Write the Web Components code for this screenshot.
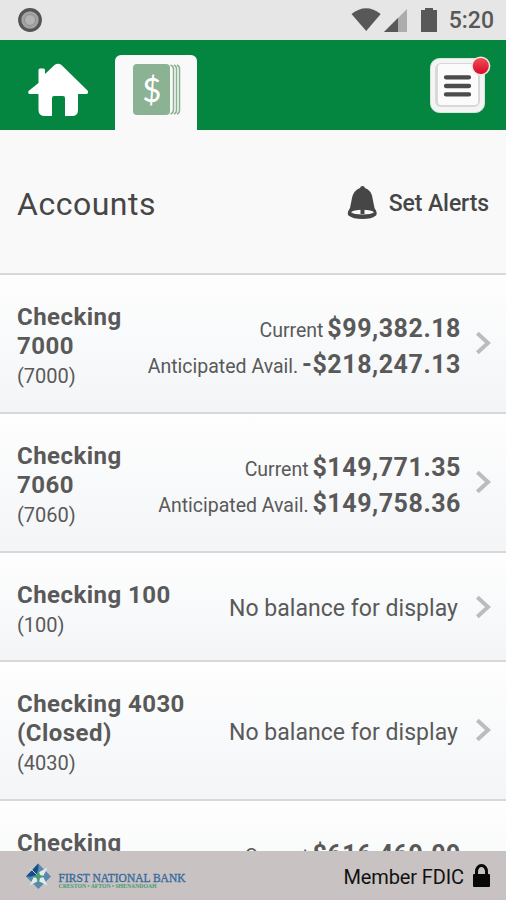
<!DOCTYPE html>
<html lang="en"><head><meta charset="utf-8"><title>Accounts</title>
<style>
html,body{margin:0;height:100%;overflow:hidden;background:#f9f9f9;font-family:Roboto,"Liberation Sans",sans-serif}
</style></head><body>
<bank-app></bank-app>
<script>
function define(name, html, setup){
  const t=document.createElement('template');t.innerHTML=html;
  customElements.define(name,class extends HTMLElement{
    connectedCallback(){
      if(this.shadowRoot)return;
      this.attachShadow({mode:'open'}).appendChild(t.content.cloneNode(true));
      if(setup)setup(this,this.shadowRoot);
    }
  });
}
define('status-bar',`<style>
:host{display:flex;align-items:center;height:40px;box-sizing:border-box;background:#e6e6e6;padding:0 12px 0 18px;color:#585858}
.sp{flex:1}svg{display:block;flex:none}
.time{font-size:23px;font-weight:500;line-height:40px;margin-left:11px;padding-top:1px;box-sizing:border-box;height:40px}
</style>
<svg width="24" height="40" viewBox="0 0 24 40"><circle cx="12" cy="20" r="10.300" fill="#a3a3a3" stroke="#555" stroke-width="3.200"/><circle cx="12" cy="20" r="5.500" fill="#b4b4b4" stroke="#8f8f8f" stroke-width="1"/></svg>
<span class="sp"></span>
<svg width="88" height="40" viewBox="350 0 88 40"><path d="M351.500 14Q366 2.500 380.700 14L366.200 31Z" fill="#585858"/><path d="M407 9V32H384Z" fill="#acacac"/><path d="M398 18V32H384Z" fill="#585858"/><path d="M425 8H433V10H437V32H421V10H425Z" fill="#585858"/></svg>
<span class="time">5:20</span>`);

define('nav-bar',`<style>
:host{display:flex;height:90px;background:#048641;align-items:flex-end;padding:0 14px 0 28px;box-sizing:border-box}
svg{display:block}
.home{width:60px;height:90px;margin-right:27px}
.tab{width:82px;height:75px;background:#f9f9f9;border-radius:6px 6px 0 0}
.sp{flex:1}
.menu{width:64px;height:90px}
</style>
<svg class="home" viewBox="28 40 60 90"><path d="M38.500 83V70Q38.500 68.500 40 68.500H43.500Q45 68.500 45 70V74L54.500 65Q58 62.500 61.500 65L88 91Q88.500 94 86 94H78V110Q78 116 72 116H65V98Q65 96 63 96H54Q52 96 52 98V116H45Q38.500 116 38.500 110V94H30Q27.500 94 28.500 91Z" fill="#fff"/></svg>
<div class="tab"><svg width="82" height="75" viewBox="115 55 82 75"><rect x="133" y="64" width="37" height="51" rx="4" fill="#8bb292"/><path d="M170.500 65Q173.500 66 173.500 69V110Q173.500 113 170.500 114M174 65Q176.500 66 176.500 69V110Q176.500 113 174 114M177 65Q179.500 66 179.500 69V110Q179.500 113 177 114" fill="none" stroke="#8bb292" stroke-width="1.500"/><text x="151.700" y="101.500" text-anchor="middle" font-family="Lato" font-size="33" fill="#fff">$</text></svg></div>
<span class="sp"></span>
<svg class="menu" viewBox="428 40 64 90"><defs><linearGradient id="r" x2="0" y2="1"><stop stop-color="#f05258"/><stop offset="1" stop-color="#d80825"/></linearGradient></defs>
<rect x="430.500" y="58.500" width="54" height="54" rx="9" fill="#f4f4f4" stroke="#d5e6dc"/><rect x="435" y="63" width="45" height="44" rx="6" fill="#d8d8d8"/><rect x="438" y="64" width="40" height="41" rx="3" fill="#fbfbfb"/>
<path d="M446 77.300H469M446 86H469M446 94.400H469" stroke="#4b4b4b" stroke-width="4.300" stroke-linecap="round"/><circle cx="480.800" cy="66" r="8.800" fill="url(#r)" stroke="#f5e8e8" stroke-width="1.500"/></svg>`);

define('page-heading',`<style>
:host{display:flex;height:145px;box-sizing:border-box;border-bottom:2px solid #d8d8d8;background:#f9f9f9;padding:0 17px 0 17px;align-items:flex-start;color:#464646}
h1{margin:0;font-size:32px;font-weight:400;line-height:40px;padding-top:54px;flex:1;letter-spacing:.5px}
svg{display:block;margin:56px 11px 0 0}
.a{font-size:23px;font-weight:500;line-height:30px;margin-top:59px;letter-spacing:-.1px}
</style><h1>Accounts</h1>
<svg width="31" height="34" viewBox="347 186 31 34"><path d="M362.500 186Q364.500 186 365 188Q371.500 190.500 372.500 198L374.500 208Q378 213 376 215.500Q372 219 362.500 219Q353 219 348.500 215.500Q346.500 213 350 208L352 198Q353.500 190.500 360 188Q360.500 186 362.500 186Z" fill="#464646"/><path d="M351 212.300Q353 209.800 362.500 209.800Q372 209.800 374 212.300Q371 214.500 362.500 214.500Q354 214.500 351 212.300Z" fill="#f9f9f9"/><path d="M362.500 209V214" stroke="#464646" stroke-width="4"/></svg><span class="a">Set Alerts</span>`);

define('account-row',`<style>
:host{display:flex;box-sizing:border-box;padding:28px 15px 21px 17px;border-bottom:2px solid #d6d8d9;background:linear-gradient(#fefefe,#f3f5f7);align-items:center;color:#595959;flex:none}
:host([compact]){min-height:139px}
:host([short]){padding-bottom:20px}
.n{font-size:24px;font-weight:700;line-height:29px;letter-spacing:.45px;white-space:pre-line}
.s{font-size:20px;line-height:30px}
.l{align-self:flex-start}
.r{flex:1;text-align:right;margin-right:14px}
svg{display:block;flex:none;margin-bottom:8px}
</style><div class="l"><div class="n"></div><div class="s"></div></div><div class="r"><slot></slot></div>
<svg width="16" height="24" viewBox="0 0 16 24"><path d="M2.300 2.200L13 12L2.300 21.800" fill="none" stroke="#bcbcbc" stroke-width="4"/></svg>`,
(h,r)=>{
  r.querySelector('.n').textContent=h.getAttribute('name').replace('|','\n');
  const number=h.getAttribute('number');
  if(number)r.querySelector('.s').textContent='('+number+')';
});

define('balance-line',`<style>
:host{display:block;white-space:nowrap;line-height:36px;height:36px;font-size:19.500px}
b{font-size:25px;font-weight:700;letter-spacing:.55px;margin-left:-1px}
</style><slot></slot> <b></b>`,(h,r)=>{r.querySelector('b').textContent=h.getAttribute('amount');});

define('no-balance',`<style>:host{display:block;font-size:23px;line-height:30px;letter-spacing:.04px;padding:0 3px 3px 0}</style>No balance for display`);

define('bank-footer',`<style>
:host{display:flex;height:49px;box-sizing:border-box;background:#c8c2c2;align-items:center;padding:0 16px 0 25px}
svg{display:block;flex:none}
.f{margin-left:auto;font-size:20px;color:#111;line-height:47px;padding-top:3px;margin-right:9px;letter-spacing:-.12px}
</style>
<svg width="164" height="30" viewBox="25 861 164 30">
<path d="M38.300 863.500L51 876.500L38.300 889L26 876.500Z" fill="#5b88b0"/>
<path d="M29.500 868L38.300 872.500L47.500 867.500L43 876.500L47.500 885.500L38.300 881L29.500 885.500L34 876.500Z" fill="#e1ebeb"/>
<path d="M38.300 863.500V874L36 876.500H26Z" fill="#174d86"/>
<path d="M30 868L37 875" stroke="#bccdd9" stroke-width="1"/>
<path d="M38.300 869L40 875L46 876.500L40 878L38.300 885L36.500 878L31 876.500L36.500 875Z" fill="#4c9b7a"/>
<text x="58.500" y="881.500" font-family="Liberation Serif" font-size="12.500" stroke="#396b9c" stroke-width=".35" fill="#396b9c" textLength="127" lengthAdjust="spacingAndGlyphs">FIRST NATIONAL BANK</text>
<text x="58.500" y="888" font-family="Liberation Serif" font-size="5.500" font-weight="700" fill="#459a70" textLength="98" lengthAdjust="spacingAndGlyphs">CRESTON • AFTON • SHENANDOAH</text></svg>
<span class="f">Member FDIC</span>
<svg width="17" height="24" viewBox="0 0 17 24"><path d="M3.500 11V7.500A5 6 0 0 1 13.500 7.500V11" fill="none" stroke="#080808" stroke-width="3"/><rect y="10" width="17" height="13" rx="1" fill="#080808"/></svg>`);

define('bank-app',`<style>
:host{display:flex;flex-direction:column;width:506px;height:900px;overflow:hidden}
main{flex:1;min-height:0;overflow:hidden;display:flex;flex-direction:column}
status-bar,nav-bar,page-heading,bank-footer{flex:none}
</style><status-bar></status-bar><nav-bar></nav-bar><page-heading></page-heading>
<main>
<account-row name="Checking|7000" number="7000"><balance-line amount="$99,382.18">Current</balance-line><balance-line amount="-$218,247.13">Anticipated Avail.</balance-line></account-row>
<account-row name="Checking|7060" number="7060"><balance-line amount="$149,771.35">Current</balance-line><balance-line amount="$149,758.36">Anticipated Avail.</balance-line></account-row>
<account-row short name="Checking 100" number="100"><no-balance></no-balance></account-row>
<account-row name="Checking 4030|(Closed)" number="4030"><no-balance></no-balance></account-row>
<account-row compact name="Checking"><balance-line amount="$616,469.09">Current</balance-line><balance-line></balance-line></account-row>
</main><bank-footer></bank-footer>`);
</script></body></html>
